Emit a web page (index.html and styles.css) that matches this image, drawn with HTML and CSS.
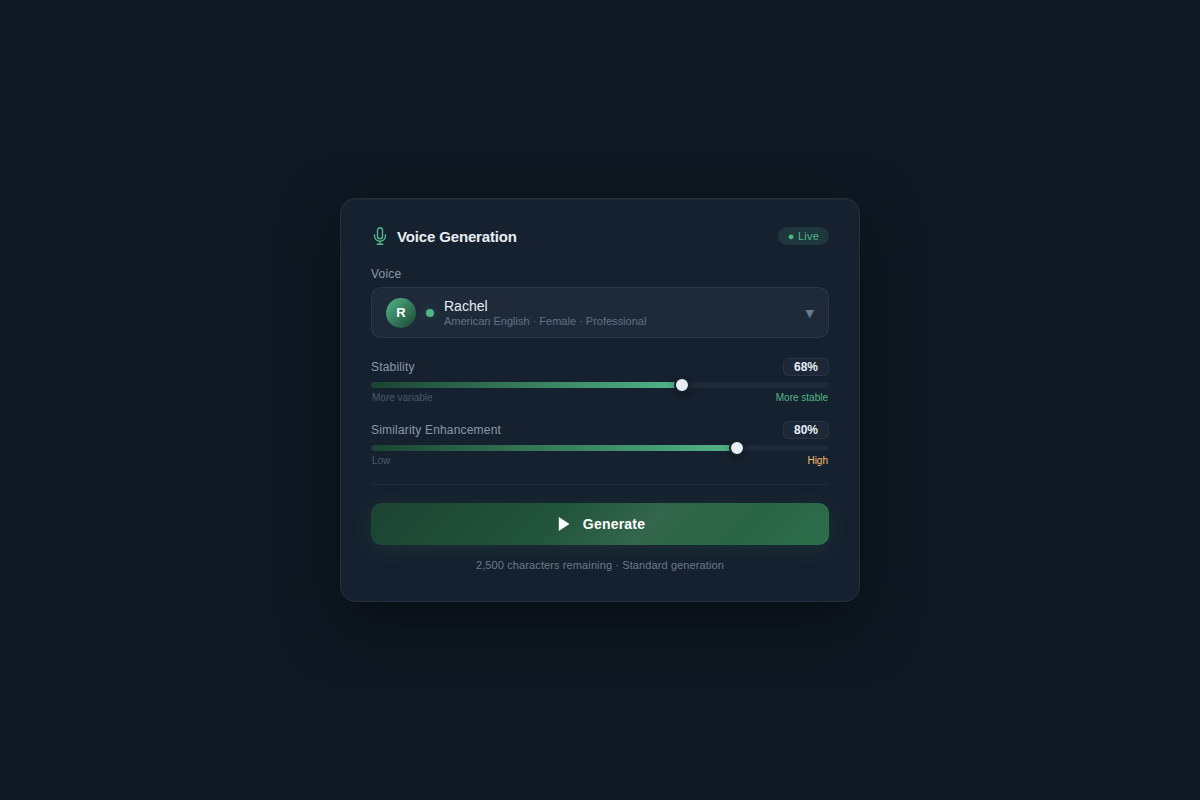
FILE: index.html
```
<!DOCTYPE html>
<html lang="en">
<head>
    <meta charset="UTF-8">
    <meta name="viewport" content="width=device-width, initial-scale=1.0">
    <title>Voice Generation</title>
    <link rel="stylesheet" href="styles.css">
</head>
<body>
    <main class="card">
        <header class="card-header">
            <svg class="mic-icon" viewBox="0 0 18 18" fill="none" stroke="currentColor" stroke-width="1.4" stroke-linecap="round" aria-hidden="true">
                <rect x="6.5" y="0.75" width="5" height="11" rx="2.5"/>
                <path d="M3.5 7.7v1.4a5.5 5.2 0 0 0 11 0V7.7"/>
                <path d="M9 14.4v2.8M6.2 17.2h5.6"/>
            </svg>
            <h1 class="card-title">Voice Generation</h1>
            <span class="badge">● Live</span>
        </header>

        <div class="field">
            <span class="label" id="voice-label">Voice</span>
            <button class="voice-select" type="button" aria-haspopup="listbox" aria-labelledby="voice-label voice-name">
                <span class="avatar">R</span>
                <span class="status-dot"></span>
                <span class="voice-info">
                    <span class="voice-name" id="voice-name">Rachel</span>
                    <span class="voice-meta">American English · Female · Professional</span>
                </span>
                <span class="arrow">▼</span>
            </button>
        </div>

        <div class="slider-group">
            <div class="slider-header">
                <label class="label" for="stability">Stability</label>
                <output class="value" for="stability">68%</output>
            </div>
            <div class="slider" style="--value: 68%">
                <input type="range" id="stability" min="0" max="100" value="68">
            </div>
            <div class="hints">
                <span>More variable</span>
                <span class="hint-good">More stable</span>
            </div>
        </div>

        <div class="slider-group">
            <div class="slider-header">
                <label class="label" for="similarity">Similarity Enhancement</label>
                <output class="value" for="similarity">80%</output>
            </div>
            <div class="slider" style="--value: 80%">
                <input type="range" id="similarity" min="0" max="100" value="80">
            </div>
            <div class="hints">
                <span>Low</span>
                <span class="hint-warn">High</span>
            </div>
        </div>

        <footer class="card-footer">
            <button class="generate" type="button">
                <svg class="play-icon" viewBox="0 0 18 18" fill="currentColor" aria-hidden="true">
                    <path d="M3.8 2l10.7 7-10.7 7z"/>
                </svg>
                Generate
            </button>
            <p class="note">2,500 characters remaining · Standard generation</p>
        </footer>
    </main>

    <script>
        // Keep the fill and the percentage in step with the thumb
        document.querySelectorAll('.slider input').forEach(input => {
            input.addEventListener('input', () => {
                const value = input.value + '%';
                input.parentElement.style.setProperty('--value', value);
                document.querySelector('output[for="' + input.id + '"]').textContent = value;
            });
        });
    </script>
</body>
</html>
```

FILE: styles.css
```
* {
    box-sizing: border-box;
}

body {
    margin: 0;
    min-height: 100vh;
    display: flex;
    align-items: center;
    justify-content: center;
    background-color: #0f1923;
    color: #e8edf2;
    font-family: "Liberation Sans", Arial, sans-serif;
}

button {
    font-family: inherit;
    cursor: pointer;
}

.card {
    width: 100%;
    max-width: 520px;
    padding: 28px 30px;
    background-color: #16212f;
    border: 1px solid rgba(255, 255, 255, 0.06);
    border-radius: 16px;
    box-shadow: 0 20px 60px rgba(0, 0, 0, 0.5), inset 0 1px 0 rgba(255, 255, 255, 0.04);
}

/* Header */
.card-header {
    display: flex;
    align-items: flex-start;
    gap: 8px;
    margin-bottom: 18px;
}

.mic-icon {
    width: 18px;
    height: 18px;
    color: #52b788;
}

.card-title {
    flex: 1;
    margin: 0;
    font-size: 15px;
    line-height: 20px;
    letter-spacing: -0.01em;
}

.badge {
    padding: 0 10px;
    border-radius: 20px;
    background-color: rgba(82, 183, 136, 0.15);
    color: #52b788;
    font-size: 11px;
    line-height: 18px;
    letter-spacing: 0.02em;
}

/* Voice picker */
.field {
    margin-bottom: 20px;
}

.label {
    display: block;
    color: #8899aa;
    font-size: 12px;
    line-height: 18px;
    letter-spacing: 0.015em;
}

.voice-select {
    display: flex;
    align-items: center;
    gap: 10px;
    width: 100%;
    margin-top: 4px;
    padding: 10px 14px 9px;
    background-color: #1e2a3a;
    border: 1px solid rgba(255, 255, 255, 0.06);
    border-radius: 10px;
    color: #e8edf2;
    text-align: left;
}

.avatar {
    width: 30px;
    height: 30px;
    border-radius: 50%;
    background: linear-gradient(135deg, #52b788, #1b4332);
    color: #fff;
    font-size: 13px;
    font-weight: bold;
    line-height: 30px;
    text-align: center;
}

.status-dot {
    width: 8px;
    height: 8px;
    border-radius: 50%;
    background-color: #52b788;
    box-shadow: 0 0 8px rgba(82, 183, 136, 0.3);
}

.voice-info {
    flex: 1;
}

.voice-name,
.voice-meta {
    display: block;
}

.voice-name {
    font-size: 14px;
    line-height: 16px;
}

.voice-meta {
    color: #627184;
    font-size: 11px;
    line-height: 14px;
}

.arrow {
    color: #6b7a8d;
    font-family: "DejaVu Sans", sans-serif;
    font-size: 11px;
}

/* Sliders */
.slider-group {
    margin-bottom: 16px;
}

.slider-header,
.hints {
    display: flex;
    align-items: center;
    justify-content: space-between;
}

.value {
    padding: 0 10px;
    background-color: #1c2838;
    border: 1px solid rgba(255, 255, 255, 0.06);
    border-radius: 6px;
    font-size: 12px;
    font-weight: bold;
    line-height: 16px;
}

.slider {
    display: flex;
    align-items: center;
    height: 6px;
    margin: 6px 0 3px;
    border-radius: 3px;
    background: linear-gradient(90deg, #1b4332, #52b788) 0 0 / var(--value) 100% no-repeat #1e2a3a;
}

/* Wider than the track by half a thumb on each side */
.slider input {
    flex: 1;
    height: 16px;
    margin: 0 -8px;
    appearance: none;
    background: none;
    cursor: pointer;
}

.slider input::-webkit-slider-thumb {
    appearance: none;
    width: 16px;
    height: 16px;
    border: 2px solid #16212f;
    border-radius: 50%;
    background-color: #e8edf2;
    box-shadow: 0 2px 8px rgba(0, 0, 0, 0.4);
}

.hints {
    padding: 0 1px;
    color: #4a586a;
    font-size: 10px;
    line-height: 14px;
}

.hint-good {
    color: #52b788;
}

.hint-warn {
    color: #f4c06a;
}

/* Footer */
.card-footer {
    padding-top: 18px;
    border-top: 1px solid rgba(255, 255, 255, 0.05);
}

.generate {
    display: flex;
    align-items: center;
    justify-content: center;
    gap: 10px;
    width: 100%;
    height: 42px;
    padding: 0;
    border: 0;
    border-radius: 10px;
    background: linear-gradient(135deg, transparent 40%, rgba(255, 255, 255, 0.06) 60%, transparent 80%), linear-gradient(135deg, #1b4332, #2d6e4a);
    box-shadow: 0 4px 20px rgba(45, 110, 74, 0.2);
    color: #fff;
    font-size: 14px;
    font-weight: bold;
    letter-spacing: 0.015em;
}

.play-icon {
    width: 18px;
    height: 18px;
}

.note {
    margin: 12px 0 0;
    color: #6b7a8a;
    font-size: 11px;
    line-height: 16px;
    letter-spacing: 0.01em;
    text-align: center;
}
```
